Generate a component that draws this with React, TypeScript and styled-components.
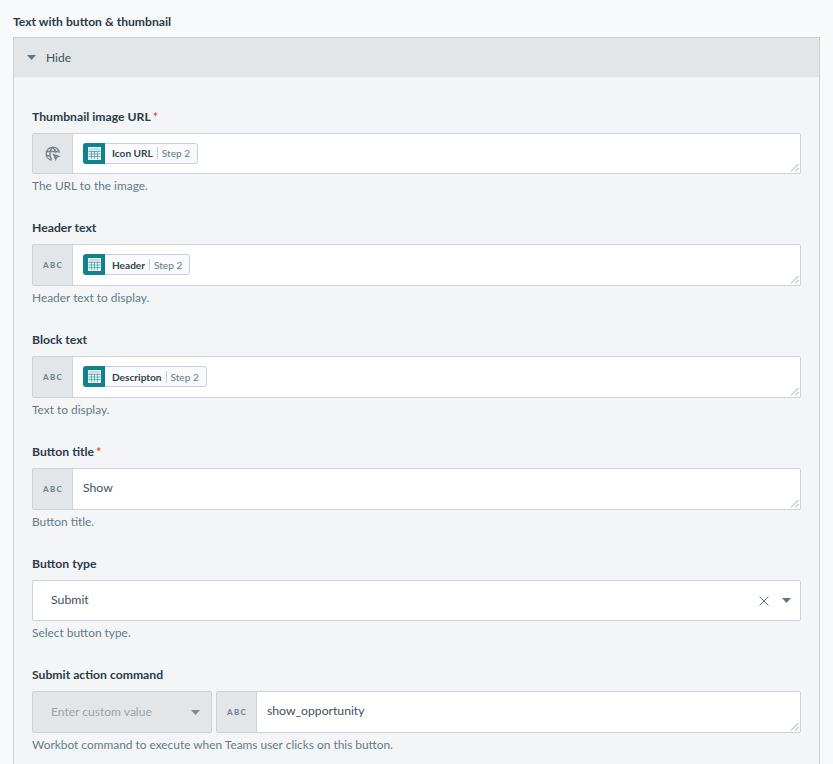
import React from 'react'
import styled, { createGlobalStyle } from 'styled-components'

const GlobalStyle = createGlobalStyle`
  html, body {
    margin: 0;
    background: #f8f9fb;
    height: 100%;
    overflow: hidden;
  }
  body {
    font-family: Lato, "Noto Sans", sans-serif;
    font-size: 12px;
    color: #2f3f4d;
  }
`

const Page = styled.div`
  padding: 13px 13px 0;
  height: 764px;
  box-sizing: border-box;
  overflow: hidden;
`

const Title = styled.div`
  font-size: 12.15px;
  font-weight: 700;
  line-height: 17px;
  margin-bottom: 7px;
  color: #2a3b49;
`

const Panel = styled.div`
  width: 807px;
  box-sizing: border-box;
  border: 1px solid #c9ced3;
  border-bottom: 0;
  background: #f3f5f7;
`

const PanelHeader = styled.div`
  height: 39px;
  background: #e3e6e9;
  display: flex;
  align-items: center;
  padding-left: 13px;
  gap: 10px;
  font-size: 12px;
  color: #3f4f5c;
`

const PanelBody = styled.div`
  padding: 31px 18px 0;
`

const Field = styled.div<{ $short?: boolean }>`
  height: ${p => (p.$short ? 111 : 112)}px;
`

const Label = styled.div`
  font-size: 12.2px;
  font-weight: 700;
  line-height: 17px;
  margin-bottom: 8px;
  color: #2a3b49;
`

const Required = styled.span`
  color: #d9433a;
  margin-left: 2px;
  font-size: 13px;
  font-weight: 400;
  position: relative;
  top: 1px;
`

const Hint = styled.div`
  font-size: 11.9px;
  line-height: 16px;
  margin-top: 4px;
  color: #647a8a;
`

const Row = styled.div`
  display: flex;
  gap: 4px;
`

const InputBox = styled.div<{ $short?: boolean }>`
  position: relative;
  flex: 1;
  height: ${p => (p.$short ? 41 : 42)}px;
  box-sizing: border-box;
  display: flex;
  background: #fff;
  border: 1px solid #ccd3da;
  border-radius: 2px;
`

const TypeCell = styled.div`
  width: 40px;
  box-sizing: border-box;
  flex: none;
  background: #e3e6e9;
  border-right: 1px solid #ccd3da;
  display: flex;
  align-items: center;
  justify-content: center;
  padding-left: 1px;
`

const AbcText = styled.span`
  font-size: 8px;
  font-weight: 900;
  letter-spacing: 1.2px;
  color: #76848f;
`

const InputValue = styled.div`
  flex: 1;
  display: flex;
  align-items: center;
  padding-left: 10px;
  font-size: 12.2px;
  color: #3f4f5a;
`

const TextValue = styled.span`
  position: relative;
  top: -2px;
`

const Pill = styled.span`
  display: inline-flex;
  align-items: center;
  height: 21px;
  margin-bottom: 1px;
  box-sizing: border-box;
  border: 1px solid #c5d1dc;
  border-radius: 3px;
  background: #f8fafc;
  padding-right: 7px;
  font-size: 10.1px;
`

const PillIcon = styled.span`
  width: 22px;
  height: 21px;
  margin: -1px 7px -1px -1px;
  background: #0f8290;
  border-radius: 3px 0 0 3px;
  display: flex;
  align-items: center;
  justify-content: center;
`

const PillName = styled.span`
  font-weight: 700;
  color: #33434f;
`

const PillStep = styled.span`
  margin-left: 4px;
  padding-left: 4px;
  border-left: 1px solid #c5d1dc;
  line-height: 12px;
  color: #64798a;
`

const Grip = styled.svg`
  position: absolute;
  right: 1px;
  bottom: 1px;
`

const SelectBox = styled.div`
  height: 41px;
  box-sizing: border-box;
  display: flex;
  align-items: center;
  background: #fff;
  border: 1px solid #ccd3da;
  border-radius: 2px;
  padding: 0 9px 0 18px;
  font-size: 12.3px;
  color: #3f4f5a;
`

const SelectValue = styled.span`
  flex: 1;
  position: relative;
  top: -1px;
`

const Clear = styled.svg`
  margin-right: 13px;
`

const DisabledSelect = styled.div`
  width: 180px;
  flex: none;
  height: 42px;
  box-sizing: border-box;
  display: flex;
  align-items: center;
  justify-content: space-between;
  background: #e3e6e9;
  border: 1px solid #ccd3da;
  border-radius: 2px;
  padding: 0 11px 0 18px;
  font-size: 12.05px;
  color: #98a3ad;
`

const DisabledText = styled.span`
  position: relative;
  top: -1px;
`

const Caret = ({ color = '#5f7484' }: { color?: string }) => (
  <svg width="9" height="5" viewBox="0 0 9 5"><path d="M0 0h9L4.5 5z" fill={color} /></svg>
)

const ResizeGrip = () => (
  <Grip width="9" height="9" viewBox="0 0 9 9">
    <path d="M1 8.5 8.5 1M5 8.5 8.5 5" stroke="#9aa0a6" strokeWidth="1" fill="none" />
  </Grip>
)

const TableIcon = () => (
  <svg width="13" height="13" viewBox="0 0 13 13">
    <rect x="0" y="0" width="13" height="13" fill="#e9f5f6" />
    <rect x="1" y="1" width="11" height="2.5" fill="#bfe0e3" />
    <path d="M0.5 4.5h12M0.5 7h12M0.5 9.5h12M3.5 4v8M6.5 4v8M9.5 4v8" stroke="#3f9aa5" strokeWidth="0.7" />
  </svg>
)

const GlobeIcon = () => (
  <svg width="16" height="16" viewBox="0 0 16 16" fill="none" stroke="#76848f" strokeWidth="1.5">
    <path d="M6.5 14.2A6.6 6.6 0 1 1 14.4 6.8" />
    <path d="M1.6 5.4h11.6M1.4 9.8h4.4M7.6 1.2c-3.4 3.6-3.4 8.8-1 12.8M7.6 1.2c2 1.8 3 3.8 3.2 5.6" />
    <path d="M7.5 7.5l8 2.8-3.4 1.4-1.4 3.6z" fill="#76848f" stroke="none" />
  </svg>
)

const Abc = () => (
  <TypeCell>
    <AbcText>ABC</AbcText>
  </TypeCell>
)

const DataPill = ({ name }: { name: string }) => (
  <Pill>
    <PillIcon><TableIcon /></PillIcon>
    <PillName>{name}</PillName>
    <PillStep>Step 2</PillStep>
  </Pill>
)

const App = () => {
  return (
    <Page>
      <GlobalStyle />
      <Title>Text with button &amp; thumbnail</Title>
      <Panel>
        <PanelHeader>
          <Caret />
          Hide
        </PanelHeader>
        <PanelBody>
          <Field $short>
            <Label>Thumbnail image URL<Required>*</Required></Label>
            <InputBox $short>
              <TypeCell><GlobeIcon /></TypeCell>
              <InputValue><DataPill name="Icon URL" /></InputValue>
              <ResizeGrip />
            </InputBox>
            <Hint>The URL to the image.</Hint>
          </Field>
          <Field>
            <Label>Header text</Label>
            <InputBox>
              <Abc />
              <InputValue><DataPill name="Header" /></InputValue>
              <ResizeGrip />
            </InputBox>
            <Hint>Header text to display.</Hint>
          </Field>
          <Field>
            <Label>Block text</Label>
            <InputBox>
              <Abc />
              <InputValue><DataPill name="Descripton" /></InputValue>
              <ResizeGrip />
            </InputBox>
            <Hint>Text to display.</Hint>
          </Field>
          <Field>
            <Label>Button title<Required>*</Required></Label>
            <InputBox>
              <Abc />
              <InputValue><TextValue>Show</TextValue></InputValue>
              <ResizeGrip />
            </InputBox>
            <Hint>Button title.</Hint>
          </Field>
          <Field $short>
            <Label>Button type</Label>
            <SelectBox>
              <SelectValue>Submit</SelectValue>
              <Clear width="10" height="10" viewBox="0 0 10 10">
                <path d="M.5.5l9 9M9.5.5l-9 9" stroke="#5f7484" strokeWidth="1" />
              </Clear>
              <Caret />
            </SelectBox>
            <Hint>Select button type.</Hint>
          </Field>
          <Field>
            <Label>Submit action command</Label>
            <Row>
              <DisabledSelect>
                <DisabledText>Enter custom value</DisabledText>
                <Caret color="#7d8a95" />
              </DisabledSelect>
              <InputBox>
                <Abc />
                <InputValue><TextValue>show_opportunity</TextValue></InputValue>
                <ResizeGrip />
              </InputBox>
            </Row>
            <Hint>Workbot command to execute when Teams user clicks on this button.</Hint>
          </Field>
        </PanelBody>
      </Panel>
    </Page>
  )
}

export default App
